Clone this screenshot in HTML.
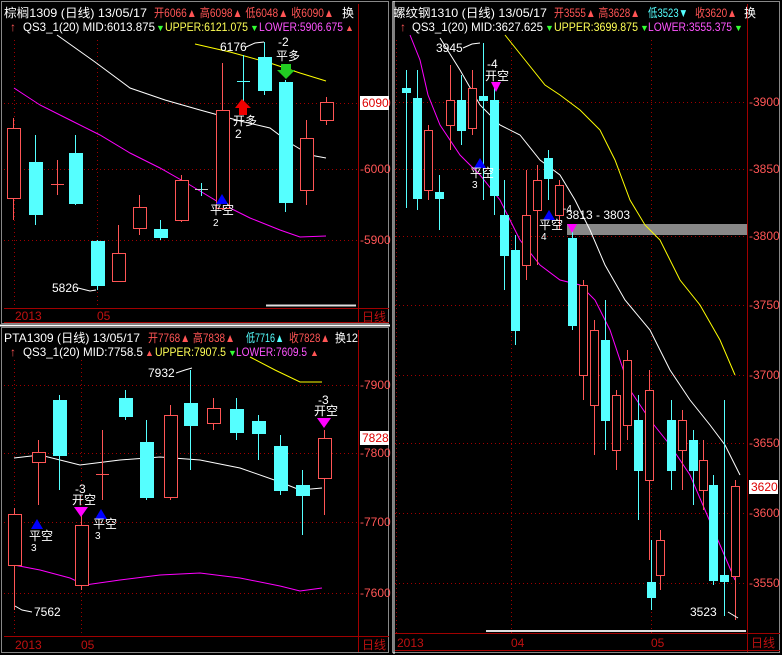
<!DOCTYPE html>
<html><head><meta charset="utf-8"><style>
html,body{margin:0;padding:0;background:#000;width:782px;height:655px;overflow:hidden}
svg{display:block}
text{font-family:"Liberation Sans","Noto Sans CJK SC",sans-serif;font-size:12px}
.w{fill:#fff}.r{fill:#ff5555}.c{fill:#55ffff}.y{fill:#ffff55}.m{fill:#ff55ff}.dr{fill:#c01010}
.g{stroke:#a00000;stroke-width:1;stroke-dasharray:1 3}
.rc{fill:#000;stroke:#ff5555;stroke-width:1}
.cc{fill:#55ffff;stroke:#55ffff;stroke-width:1}
.rw{stroke:#ff5555}.cw{stroke:#55ffff}
</style></head><body>
<svg width="782" height="655" viewBox="0 0 782 655" xmlns="http://www.w3.org/2000/svg">
<rect width="782" height="655" fill="#000"/>
<rect x="1.5" y="1.5" width="387" height="322" fill="none" stroke="#888"/>
<line x1="0" y1="325.5" x2="390" y2="325.5" stroke="#fff" stroke-width="2"/>
<rect x="1.5" y="327.5" width="387" height="325" fill="none" stroke="#888"/>
<rect x="392.5" y="1.5" width="387" height="651" fill="none" stroke="#888"/>
<line x1="394" y1="1" x2="394" y2="654" stroke="#fff"/>

<!-- ===== LEFT TOP ===== -->
<g>
<line x1="358.5" y1="4" x2="358.5" y2="322" stroke="#a00000"/>
<line x1="4" y1="308.5" x2="389" y2="308.5" stroke="#a00000"/>
<line x1="4" y1="322.5" x2="389" y2="322.5" stroke="#a00000"/>
<line class="g" x1="4" y1="103.5" x2="358" y2="103.5"/>
<line class="g" x1="4" y1="169.5" x2="358" y2="169.5"/>
<line class="g" x1="4" y1="240.5" x2="358" y2="240.5"/>
<line class="g" x1="14.5" y1="40" x2="14.5" y2="308"/>
<line class="g" x1="97.5" y1="40" x2="97.5" y2="308"/>
<text x="4" y="17" class="w" textLength="143" lengthAdjust="spacingAndGlyphs">棕榈1309 (日线) 13/05/17</text>
<text x="154" y="17" class="r" textLength="180" lengthAdjust="spacingAndGlyphs">开6066▲ 高6098▲ 低6048▲ 收6090▲</text>
<text x="342" y="17" class="w">换</text>
<text x="10" y="31" class="r">↑</text>
<text x="23" y="31" class="w" textLength="132" lengthAdjust="spacingAndGlyphs">QS3_1(20) MID:6013.875</text><text x="156" y="31" fill="#3f3" style="font-size:9px">▼</text>
<text x="165" y="31" class="y" textLength="83" lengthAdjust="spacingAndGlyphs">UPPER:6121.075</text><text x="250" y="31" fill="#3f3" style="font-size:9px">▼</text>
<text x="259" y="31" class="m" textLength="84" lengthAdjust="spacingAndGlyphs">LOWER:5906.675</text><text x="345" y="31" class="r" style="font-size:9px">▲</text>
<text x="360" y="107" class="r">-6100</text>
<rect x="360" y="96" width="29" height="14" fill="#fff"/><text x="362" y="107" fill="#d00">6090</text>
<text x="360" y="173" class="r">-6000</text>
<text x="360" y="244" class="r">-5900</text>
<text x="15" y="320" class="dr">2013</text><text x="97" y="320" class="dr">05</text>
<text x="362" y="321" class="dr">日线</text>
<line x1="266" y1="305.5" x2="356" y2="305.5" stroke="#ddd" stroke-width="2"/>
<polyline fill="none" stroke="#fff" points="57,35 95,62 130,88 165,100 200,110 240,121 270,128 290,143 310,155 326,158"/>
<polyline fill="none" stroke="#ff0" points="195,44 230,52 270,63 300,73 326,81"/>
<polyline fill="none" stroke="#f0f" points="14,88 40,105 70,120 100,135 130,153 160,168 190,185 220,203 250,218 280,230 300,237 326,236"/>
<g stroke-width="1">
<line class="rw" x1="13.5" y1="118" x2="13.5" y2="220"/><rect class="rc" x="7.5" y="128.5" width="13" height="70"/>
<line class="cw" x1="35.5" y1="135" x2="35.5" y2="225"/><rect class="cc" x="29.5" y="162.5" width="13" height="52"/>
<line class="rw" x1="57.5" y1="160" x2="57.5" y2="195"/><line class="rw" x1="51" y1="184.5" x2="64" y2="184.5"/>
<line class="cw" x1="75.5" y1="135" x2="75.5" y2="205"/><rect class="cc" x="69.5" y="153.5" width="13" height="50"/>
<line class="cw" x1="97.5" y1="240" x2="97.5" y2="290"/><rect class="cc" x="91.5" y="241.5" width="13" height="44"/>
<line class="rw" x1="118.5" y1="225" x2="118.5" y2="282"/><rect class="rc" x="112.5" y="253.5" width="13" height="28"/>
<line class="rw" x1="139.5" y1="195" x2="139.5" y2="235"/><rect class="rc" x="133.5" y="207.5" width="13" height="21"/>
<line class="cw" x1="160.5" y1="220" x2="160.5" y2="240"/><rect class="cc" x="154.5" y="229.5" width="13" height="8"/>
<line class="rw" x1="181.5" y1="175" x2="181.5" y2="222"/><rect class="rc" x="175.5" y="180.5" width="13" height="40"/>
<line stroke="#ccc" x1="195" y1="189.5" x2="208" y2="189.5"/><line class="cw" x1="201.5" y1="183" x2="201.5" y2="196"/>
<line class="rw" x1="222.5" y1="63" x2="222.5" y2="210"/><rect class="rc" x="216.5" y="110.5" width="13" height="98"/>
<line class="cw" x1="243.5" y1="55" x2="243.5" y2="110"/><line class="cw" x1="237" y1="81.5" x2="250" y2="81.5"/>
<line class="cw" x1="264.5" y1="42" x2="264.5" y2="95"/><rect class="cc" x="258.5" y="57.5" width="13" height="33"/>
<line class="cw" x1="285.5" y1="80" x2="285.5" y2="212"/><rect class="cc" x="279.5" y="82.5" width="13" height="120"/>
<line class="rw" x1="306.5" y1="120" x2="306.5" y2="205"/><rect class="rc" x="300.5" y="138.5" width="13" height="52"/>
<line class="rw" x1="326.5" y1="97" x2="326.5" y2="125"/><rect class="rc" x="320.5" y="102.5" width="13" height="18"/>
</g>
<text x="220" y="51" class="w">6176</text><polyline fill="none" stroke="#fff" points="246,47 255,43 264,42"/>
<text x="52" y="292" class="w">5826</text><polyline fill="none" stroke="#fff" points="78,288 90,291 96,290"/>
<text x="278" y="46" class="w">-2</text><text x="276" y="60" class="w">平多</text>
<polygon points="281,64 291,64 291,70 295,70 286,79 277,70 281,70" fill="#2c2"/>
<polygon points="242,99 251,108 247,108 247,115 239,115 239,108 235,108" fill="#e00"/>
<text x="233" y="125" class="w">开多</text><text x="235" y="138" class="w">2</text>
<polygon points="216,204 222,194 228,204" fill="#00f"/>
<text x="210" y="214" class="w">平空</text><text x="213" y="226" class="w" style="font-size:10px">2</text>
</g>

<!-- ===== LEFT BOTTOM ===== -->
<g>
<line x1="358.5" y1="330" x2="358.5" y2="652" stroke="#a00000"/>
<line x1="4" y1="636.5" x2="389" y2="636.5" stroke="#a00000"/>
<line class="g" x1="4" y1="385.5" x2="358" y2="385.5"/>
<line class="g" x1="4" y1="453.5" x2="358" y2="453.5"/>
<line class="g" x1="4" y1="522.5" x2="358" y2="522.5"/>
<line class="g" x1="4" y1="593.5" x2="358" y2="593.5"/>
<line class="g" x1="14.5" y1="360" x2="14.5" y2="636"/>
<line class="g" x1="81.5" y1="360" x2="81.5" y2="636"/>
<text x="4" y="342" class="w" textLength="136" lengthAdjust="spacingAndGlyphs">PTA1309 (日线) 13/05/17</text>
<text x="148" y="342" class="r" textLength="87" lengthAdjust="spacingAndGlyphs">开7768▲ 高7838▲</text>
<text x="246" y="342" class="c" textLength="38" lengthAdjust="spacingAndGlyphs">低7716▲</text>
<text x="289" y="342" class="r" textLength="41" lengthAdjust="spacingAndGlyphs">收7828▲</text>
<text x="335" y="342" class="w" textLength="23" lengthAdjust="spacingAndGlyphs">换12</text>
<text x="10" y="356" class="r">↑</text>
<text x="23" y="356" class="w" textLength="120" lengthAdjust="spacingAndGlyphs">QS3_1(20) MID:7758.5</text><text x="145" y="356" class="r" style="font-size:9px">▲</text>
<text x="155" y="356" class="y" textLength="71" lengthAdjust="spacingAndGlyphs">UPPER:7907.5</text><text x="228" y="356" fill="#3f3" style="font-size:9px">▼</text>
<text x="236" y="356" class="m" textLength="71" lengthAdjust="spacingAndGlyphs">LOWER:7609.5</text><text x="310" y="356" class="r" style="font-size:9px">▲</text>
<text x="360" y="389" class="r">-7900</text>
<text x="360" y="457" class="r">-7800</text>
<rect x="360" y="431" width="29" height="14" fill="#fff"/><text x="362" y="442" fill="#d00">7828</text>
<text x="360" y="526" class="r">-7700</text>
<text x="360" y="597" class="r">-7600</text>
<text x="15" y="649" class="dr">2013</text><text x="81" y="649" class="dr">05</text>
<text x="362" y="649" class="dr">日线</text>
<polyline fill="none" stroke="#fff" points="14,458 40,455 80,465 120,460 160,457 200,460 240,468 280,482 300,490 322,488"/>
<polyline fill="none" stroke="#ff0" points="250,357 275,370 300,382 322,382"/>
<polyline fill="none" stroke="#f0f" points="14,565 40,570 70,578 85,585 120,580 160,575 200,573 240,578 280,586 300,591 322,588"/>
<g>
<line class="rw" x1="14.5" y1="508" x2="14.5" y2="610"/><rect class="rc" x="8.5" y="514.5" width="13" height="51"/>
<line class="rw" x1="38.5" y1="440" x2="38.5" y2="505"/><rect class="rc" x="32.5" y="452.5" width="13" height="10"/>
<line class="cw" x1="59.5" y1="395" x2="59.5" y2="490"/><rect class="cc" x="53.5" y="400.5" width="13" height="55"/>
<line class="rw" x1="81.5" y1="510" x2="81.5" y2="590"/><rect class="rc" x="75.5" y="525.5" width="13" height="60"/>
<line class="rw" x1="102.5" y1="430" x2="102.5" y2="500"/><line class="rw" x1="96" y1="474.5" x2="109" y2="474.5"/>
<line class="cw" x1="125.5" y1="390" x2="125.5" y2="420"/><rect class="cc" x="119.5" y="398.5" width="13" height="18"/>
<line class="cw" x1="146.5" y1="420" x2="146.5" y2="500"/><rect class="cc" x="140.5" y="442.5" width="13" height="55"/>
<line class="rw" x1="170.5" y1="405" x2="170.5" y2="500"/><rect class="rc" x="164.5" y="415.5" width="13" height="82"/>
<line class="cw" x1="190.5" y1="370" x2="190.5" y2="470"/><rect class="cc" x="184.5" y="403.5" width="13" height="22"/>
<line class="rw" x1="213.5" y1="398" x2="213.5" y2="430"/><rect class="rc" x="207.5" y="408.5" width="13" height="15"/>
<line class="cw" x1="236.5" y1="398" x2="236.5" y2="440"/><rect class="cc" x="230.5" y="409.5" width="13" height="23"/>
<line class="cw" x1="258.5" y1="415" x2="258.5" y2="460"/><rect class="cc" x="252.5" y="421.5" width="13" height="12"/>
<line class="cw" x1="280.5" y1="435" x2="280.5" y2="495"/><rect class="cc" x="274.5" y="446.5" width="13" height="44"/>
<line class="cw" x1="302.5" y1="470" x2="302.5" y2="535"/><rect class="cc" x="296.5" y="485.5" width="13" height="10"/>
<line class="rw" x1="324.5" y1="430" x2="324.5" y2="515"/><rect class="rc" x="318.5" y="438.5" width="13" height="40"/>
</g>
<text x="148" y="377" class="w">7932</text><polyline fill="none" stroke="#fff" points="176,373 185,370 192,368"/>
<text x="34" y="616" class="w">7562</text><polyline fill="none" stroke="#fff" points="32,612 22,610 15,606"/>
<polygon points="31,529 37,519 43,529" fill="#00f"/><text x="29" y="540" class="w">平空</text><text x="31" y="551" class="w" style="font-size:10px">3</text>
<text x="75" y="493" class="w">-3</text><text x="72" y="504" class="w">开空</text>
<polygon points="74,507 88,507 81,517" fill="#f0f"/>
<polygon points="95,519 101,509 107,519" fill="#00f"/><text x="93" y="528" class="w">平空</text><text x="95" y="539" class="w" style="font-size:10px">3</text>
<text x="318" y="404" class="w">-3</text><text x="314" y="415" class="w">开空</text>
<polygon points="317,418 331,418 324,428" fill="#f0f"/>
</g>

<!-- ===== RIGHT ===== -->
<g>
<line x1="747.5" y1="4" x2="747.5" y2="652" stroke="#a00000"/>
<line x1="395" y1="633.5" x2="780" y2="633.5" stroke="#a00000"/>
<line x1="395" y1="650.5" x2="780" y2="650.5" stroke="#a00000"/>
<line class="g" x1="395" y1="102.5" x2="747" y2="102.5"/>
<line class="g" x1="395" y1="169.5" x2="747" y2="169.5"/>
<line class="g" x1="395" y1="236.5" x2="747" y2="236.5"/>
<line class="g" x1="395" y1="305.5" x2="747" y2="305.5"/>
<line class="g" x1="395" y1="375.5" x2="747" y2="375.5"/>
<line class="g" x1="395" y1="443.5" x2="747" y2="443.5"/>
<line class="g" x1="395" y1="513.5" x2="747" y2="513.5"/>
<line class="g" x1="395" y1="583.5" x2="747" y2="583.5"/>
<line class="g" x1="396.5" y1="40" x2="396.5" y2="633"/>
<line class="g" x1="511.5" y1="40" x2="511.5" y2="633"/>
<line class="g" x1="651.5" y1="40" x2="651.5" y2="633"/>
<text x="393" y="17" class="w" textLength="154" lengthAdjust="spacingAndGlyphs">螺纹钢1310 (日线) 13/05/17</text>
<text x="554" y="17" class="r" textLength="86" lengthAdjust="spacingAndGlyphs">开3555▲ 高3628▲</text>
<text x="648" y="17" class="c" textLength="40" lengthAdjust="spacingAndGlyphs">低3523▼</text>
<text x="695" y="17" class="r" textLength="42" lengthAdjust="spacingAndGlyphs">收3620▲</text>
<text x="744" y="17" class="w">换</text>
<text x="400" y="31" class="r">↑</text>
<text x="412" y="31" class="w" textLength="131" lengthAdjust="spacingAndGlyphs">QS3_1(20) MID:3627.625</text><text x="545" y="31" fill="#3f3" style="font-size:9px">▼</text>
<text x="554" y="31" class="y" textLength="84" lengthAdjust="spacingAndGlyphs">UPPER:3699.875</text><text x="640" y="31" fill="#3f3" style="font-size:9px">▼</text>
<text x="648" y="31" class="m" textLength="84" lengthAdjust="spacingAndGlyphs">LOWER:3555.375</text><text x="734" y="31" fill="#3f3" style="font-size:9px">▼</text>
<text x="749" y="106" class="r">-3900</text>
<text x="749" y="173" class="r">-3850</text>
<text x="749" y="240" class="r">-3800</text>
<text x="749" y="309" class="r">-3750</text>
<text x="749" y="379" class="r">-3700</text>
<text x="749" y="447" class="r">-3650</text>
<rect x="749" y="480" width="29" height="14" fill="#fff"/><text x="751" y="491" fill="#d00">3620</text>
<text x="749" y="517" class="r">-3600</text>
<text x="749" y="587" class="r">-3550</text>
<text x="397" y="647" class="dr">2013</text><text x="511" y="647" class="dr">04</text><text x="651" y="647" class="dr">05</text>
<text x="751" y="647" class="dr">日线</text>
<line x1="486" y1="631" x2="746" y2="631" stroke="#ddd" stroke-width="2"/>
<rect x="567" y="224" width="180" height="11" fill="#888"/>
<text x="566" y="219" class="w">3813 - 3803</text>
<polyline fill="none" stroke="#fff" points="440,38 460,70 480,105 500,125 520,135 540,160 560,175 575,200 590,230 605,265 625,300 650,330 670,370 690,400 710,425 725,445 740,475"/>
<polyline fill="none" stroke="#ff0" points="505,35 525,60 545,85 560,95 580,110 600,130 615,160 630,200 645,225 660,240 680,280 700,305 720,340 735,375"/>
<polyline fill="none" stroke="#f0f" points="410,35 420,60 428,95 440,125 460,155 480,175 500,200 520,240 540,265 560,280 580,285 595,300 610,330 630,390 650,420 670,445 690,475 705,510 720,545 735,580"/>
<g>
<line class="cw" x1="406.5" y1="70" x2="406.5" y2="208"/><rect class="cc" x="402.5" y="88.5" width="8" height="4"/>
<line class="cw" x1="417.5" y1="70" x2="417.5" y2="210"/><rect class="cc" x="413.5" y="98.5" width="8" height="100"/>
<line class="rw" x1="428.5" y1="125" x2="428.5" y2="200"/><rect class="rc" x="424.5" y="130.5" width="8" height="60"/>
<line class="cw" x1="439.5" y1="175" x2="439.5" y2="230"/><rect class="cc" x="435.5" y="192.5" width="8" height="6"/>
<line class="rw" x1="450.5" y1="65" x2="450.5" y2="150"/><rect class="rc" x="446.5" y="100.5" width="8" height="25"/>
<line class="cw" x1="461.5" y1="75" x2="461.5" y2="145"/><rect class="cc" x="457.5" y="100.5" width="8" height="30"/>
<line class="rw" x1="472.5" y1="70" x2="472.5" y2="135"/><rect class="rc" x="468.5" y="88.5" width="8" height="40"/>
<line class="cw" x1="483.5" y1="43" x2="483.5" y2="200"/><rect class="cc" x="479.5" y="96.5" width="8" height="4"/>
<line class="cw" x1="494.5" y1="88" x2="494.5" y2="215"/><rect class="cc" x="490.5" y="100.5" width="8" height="95"/>
<line class="cw" x1="504.5" y1="180" x2="504.5" y2="290"/><rect class="cc" x="500.5" y="215.5" width="8" height="40"/>
<line class="cw" x1="515.5" y1="235" x2="515.5" y2="345"/><rect class="cc" x="511.5" y="250.5" width="8" height="80"/>
<line class="rw" x1="526.5" y1="170" x2="526.5" y2="280"/><rect class="rc" x="522.5" y="215.5" width="8" height="50"/>
<line class="rw" x1="537.5" y1="165" x2="537.5" y2="265"/><rect class="rc" x="533.5" y="180.5" width="8" height="30"/>
<line class="cw" x1="548.5" y1="150" x2="548.5" y2="200"/><rect class="cc" x="544.5" y="158.5" width="8" height="20"/>
<line class="rw" x1="559.5" y1="180" x2="559.5" y2="230"/><rect class="rc" x="555.5" y="185.5" width="8" height="30"/>
<line class="cw" x1="572.5" y1="230" x2="572.5" y2="330"/><rect class="cc" x="568.5" y="238.5" width="8" height="87"/>
<line class="rw" x1="583.5" y1="280" x2="583.5" y2="400"/><rect class="rc" x="579.5" y="285.5" width="8" height="90"/>
<line class="rw" x1="594.5" y1="320" x2="594.5" y2="455"/><rect class="rc" x="590.5" y="330.5" width="8" height="75"/>
<line class="cw" x1="605.5" y1="300" x2="605.5" y2="450"/><rect class="cc" x="601.5" y="340.5" width="8" height="80"/>
<line class="rw" x1="616.5" y1="390" x2="616.5" y2="470"/><rect class="rc" x="612.5" y="395.5" width="8" height="55"/>
<line class="rw" x1="627.5" y1="350" x2="627.5" y2="440"/><rect class="rc" x="623.5" y="360.5" width="8" height="65"/>
<line class="cw" x1="638.5" y1="395" x2="638.5" y2="520"/><rect class="cc" x="634.5" y="420.5" width="8" height="50"/>
<line class="rw" x1="649.5" y1="370" x2="649.5" y2="560"/><rect class="rc" x="645.5" y="390.5" width="8" height="90"/>
<line class="cw" x1="651.5" y1="540" x2="651.5" y2="610"/><rect class="cc" x="647.5" y="582.5" width="8" height="15"/>
<line class="rw" x1="660.5" y1="530" x2="660.5" y2="590"/><rect class="rc" x="656.5" y="540.5" width="8" height="35"/>
<line class="cw" x1="671.5" y1="400" x2="671.5" y2="490"/><rect class="cc" x="667.5" y="420.5" width="8" height="50"/>
<line class="rw" x1="682.5" y1="410" x2="682.5" y2="490"/><rect class="rc" x="678.5" y="420.5" width="8" height="30"/>
<line class="cw" x1="693.5" y1="430" x2="693.5" y2="505"/><rect class="cc" x="689.5" y="440.5" width="8" height="30"/>
<line class="rw" x1="703.5" y1="440" x2="703.5" y2="510"/><rect class="rc" x="699.5" y="460.5" width="8" height="30"/>
<line class="cw" x1="713.5" y1="475" x2="713.5" y2="585"/><rect class="cc" x="709.5" y="485.5" width="8" height="95"/>
<line class="cw" x1="724.5" y1="400" x2="724.5" y2="616"/><rect class="cc" x="720.5" y="575.5" width="8" height="6"/>
<line class="rw" x1="735.5" y1="480" x2="735.5" y2="620"/><rect class="rc" x="731.5" y="486.5" width="8" height="90"/>
</g>
<text x="436" y="52" class="w">3945</text><polyline fill="none" stroke="#fff" points="463,48 472,44 480,43"/>
<text x="690" y="616" class="w">3523</text><polyline fill="none" stroke="#fff" points="728,612 738,618"/>
<text x="487" y="68" class="w">-4</text><text x="485" y="80" class="w">开空</text>
<polygon points="491,82 501,82 496,92" fill="#f0f"/>
<polygon points="474,168 480,158 486,168" fill="#00f"/><text x="470" y="177" class="w">平空</text><text x="472" y="188" class="w" style="font-size:10px">3</text>
<polygon points="543,220 549,210 555,220" fill="#00f"/><text x="539" y="229" class="w">平空</text><text x="541" y="240" class="w" style="font-size:10px">4</text>
<text x="563" y="212" class="w" style="font-size:10px">-4</text>
<polygon points="567,224 577,224 572,233" fill="#f0f"/>
</g>
</svg>
</body></html>
